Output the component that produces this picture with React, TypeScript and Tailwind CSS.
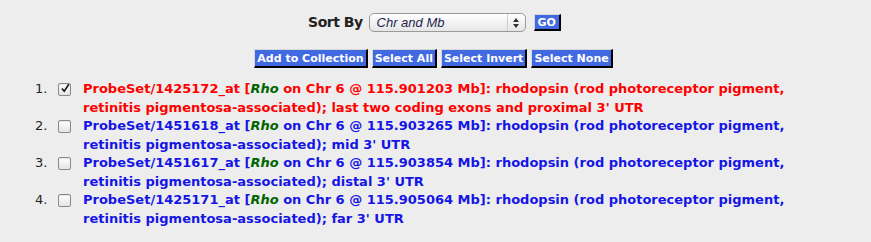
import { type ReactNode } from "react";

interface Probe {
  id: string;
  mb: string;
  tail: string;
  checked?: boolean;
}

const probes: Probe[] = [
  {
    id: "1425172_at",
    mb: "115.901203",
    tail: "last two coding exons and proximal 3' UTR",
    checked: true,
  },
  { id: "1451618_at", mb: "115.903265", tail: "mid 3' UTR" },
  { id: "1451617_at", mb: "115.903854", tail: "distal 3' UTR" },
  { id: "1425171_at", mb: "115.905064", tail: "far 3' UTR" },
];

function BlueButton({ children }: { children: ReactNode }) {
  return (
    <button className="h-[19px] px-[2px] bg-[#4169e1] text-white text-[11px] font-bold leading-none border-t border-l border-t-[#d8d8d8] border-l-[#d8d8d8] border-r-2 border-b-2 border-r-black border-b-black">
      {children}
    </button>
  );
}

function Checkbox({ checked }: { checked?: boolean }) {
  return (
    <span className="w-[13px] h-[13px] rounded-[2px] border border-[#8a8a8a] bg-gradient-to-b from-white to-[#e4e4e4] flex items-center justify-center shadow-[inset_0_1px_1px_rgba(0,0,0,0.1)]">
      {checked && (
        <svg width="13" height="13" viewBox="0 0 13 13" className="-mt-[2px] ml-[1px]">
          <path d="M2.5 6.5 L5.5 10 L11.5 1" stroke="#111" strokeWidth="2" fill="none" />
        </svg>
      )}
    </span>
  );
}

export default function App() {
  return (
    <div className="w-[871px] h-[242px] bg-[#ededed] pt-3 font-['DejaVu_Sans',sans-serif] overflow-hidden">
      <div className="flex items-center justify-center gap-[6px] pr-[2px]">
        <span className="text-[14px] font-bold text-[#222] font-['DejaVu_Sans',sans-serif] tracking-[-0.5px]">Sort By</span>
        <div className="w-[157px] h-[19px] rounded-[5px] border border-[#9a9a9a] bg-gradient-to-b from-white to-[#e6e6e6] flex items-center justify-between pl-[7px] pr-[6px]">
          <span className="text-[13px] italic text-[#1f1f4f] font-['Liberation_Sans',sans-serif]">Chr and Mb</span>
          <span className="flex items-center h-full border-l border-[#cfcfcf] pl-[5px]">
            <svg width="6" height="10" viewBox="0 0 6 10">
              <path d="M0 4 L3 0 L6 4 Z" fill="#333" />
              <path d="M0 6 L3 10 L6 6 Z" fill="#333" />
            </svg>
          </span>
        </div>
        <button className="ml-[2px] h-[17px] px-[3px] bg-[#4169e1] text-white text-[11px] font-bold leading-none border-t border-l border-t-[#d8d8d8] border-l-[#d8d8d8] border-r-2 border-b-2 border-r-black border-b-black">
          GO
        </button>
      </div>

      <div className="flex justify-center gap-[4px] mt-[16px] pr-[4px]">
        <BlueButton>Add to Collection</BlueButton>
        <BlueButton>Select All</BlueButton>
        <BlueButton>Select Invert</BlueButton>
        <BlueButton>Select None</BlueButton>
      </div>

      <ol className="mt-[12px] pl-[35px]">
        {probes.map((p, i) => (
          <li key={p.id} className="flex items-start text-[13px] leading-[18.5px]">
            <span className="w-[23px] text-[#222]">{i + 1}.</span>
            <span className="pt-[3px] w-[25px]">
              <Checkbox checked={p.checked} />
            </span>
            <span
              className={`font-bold ${p.checked ? "text-[#ff0000]" : "text-[#1515e6]"}`}
            >
              ProbeSet/{p.id} [<i className="text-[#006400]">Rho</i> on Chr 6 @ {p.mb} Mb]: rhodopsin (rod photoreceptor pigment,
              <br />
              retinitis pigmentosa-associated); {p.tail}
            </span>
          </li>
        ))}
      </ol>
    </div>
  );
}
